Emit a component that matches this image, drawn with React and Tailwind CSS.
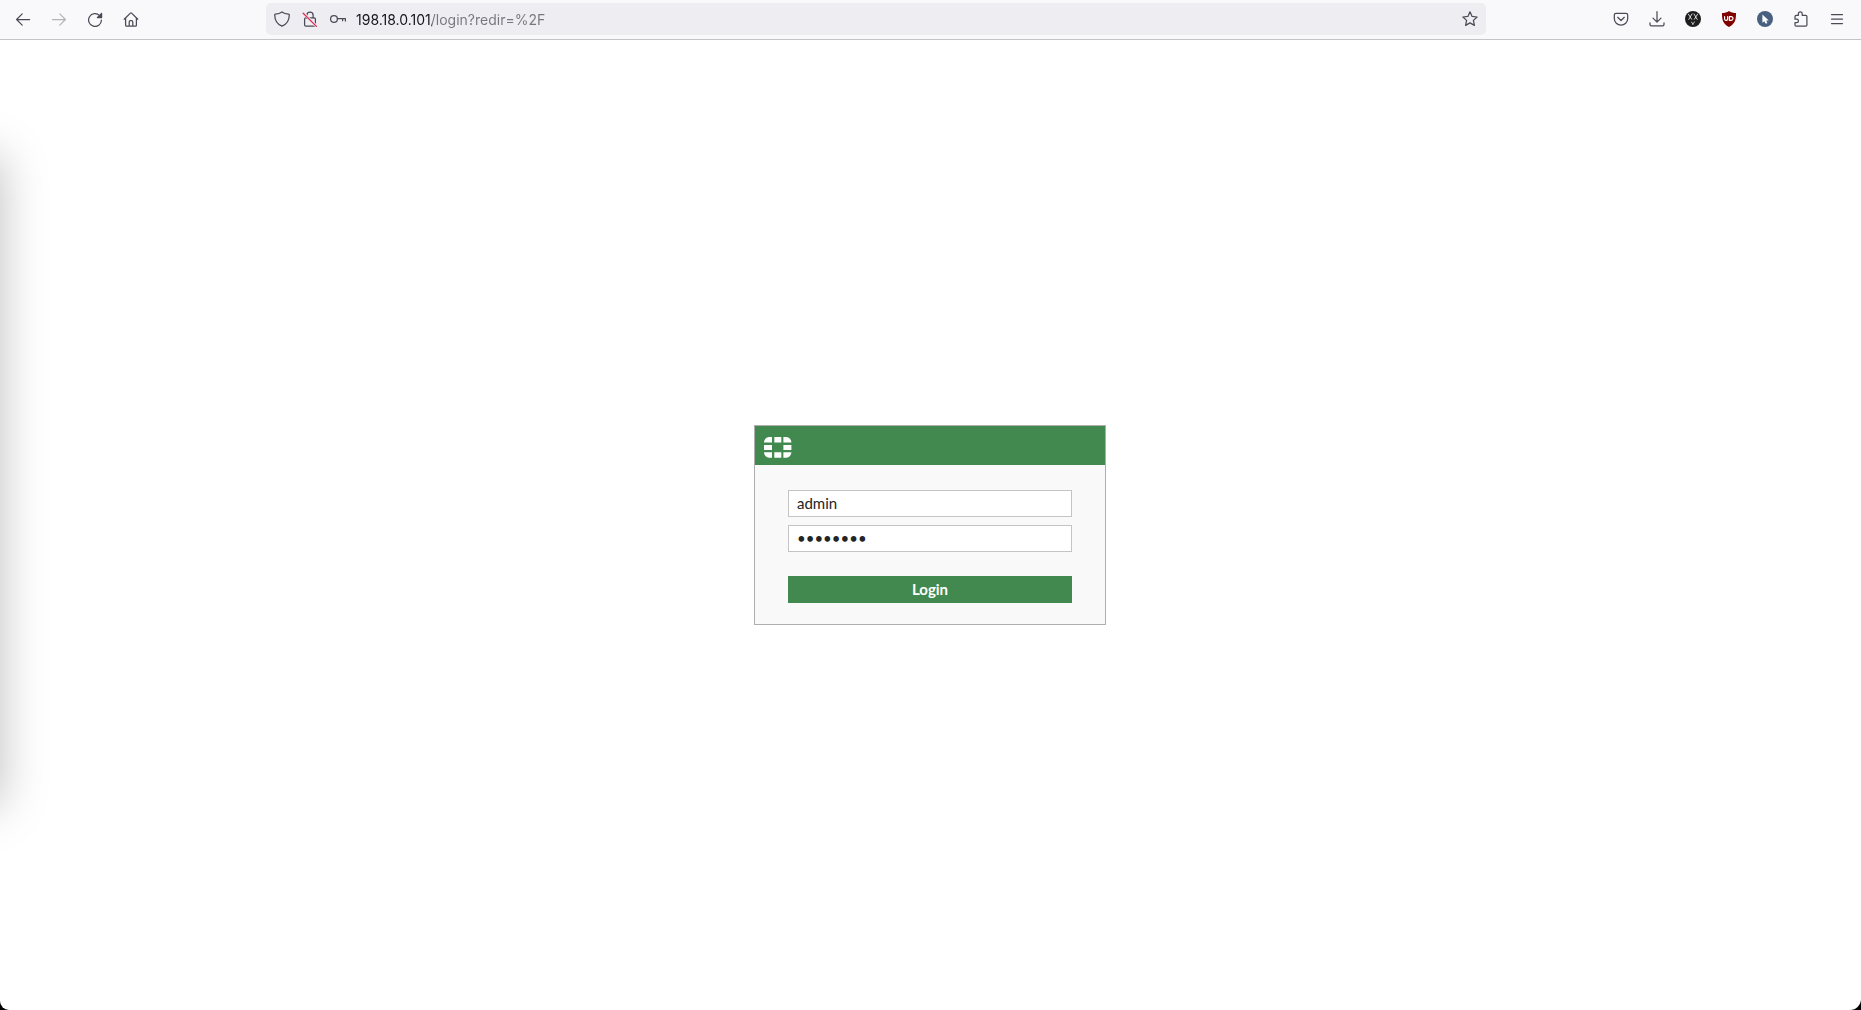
import { useState } from 'react'

function Icon({ children, className = '' }) {
  return (
    <svg
      viewBox="0 0 16 16"
      className={`w-4 h-4 shrink-0 ${className}`}
      fill="none"
      stroke="currentColor"
      strokeWidth="1.25"
      strokeLinecap="round"
      strokeLinejoin="round"
      aria-hidden="true"
    >
      {children}
    </svg>
  )
}

function ToolbarButton({ label, children, disabled }) {
  return (
    <button
      type="button"
      aria-label={label}
      disabled={disabled}
      className="flex w-9 h-8 shrink-0 items-center justify-center rounded text-[#4b4b57] hover:bg-black/5 disabled:text-[#b4b4ba]"
    >
      {children}
    </button>
  )
}

function UrlButton({ label, children }) {
  return (
    <button
      type="button"
      aria-label={label}
      className="flex w-7 h-7 shrink-0 items-center justify-center rounded text-[#4b4b57] hover:bg-black/5"
    >
      {children}
    </button>
  )
}

function UrlBar() {
  const [url, setUrl] = useState('198.18.0.101/login?redir=%2F')

  return (
    <div className="flex flex-1 min-w-0 h-8 items-center rounded-[5px] bg-[#eeedf2] px-0.5">
      <UrlButton label="Tracking protection">
        <Icon>
          <path d="M8 .9 C6.3 2.2 3.9 2.9 1.4 3.1 C.8 3.2.7 3.6.7 4 C.8 9.3 3 13.1 8 15.2 C13 13.1 15.2 9.3 15.3 4 C15.3 3.6 15.2 3.2 14.6 3.1 C12.1 2.9 9.7 2.2 8 .9Z" />
        </Icon>
      </UrlButton>
      <UrlButton label="Connection not secure">
        <Icon>
          <path d="M4.9 6.8V4.2a3.1 3.1 0 0 1 6.2 0v2.6" />
          <rect x="2.6" y="6.8" width="10.8" height="8.4" rx="1.2" />
          <path d="M1.4 2.2 14.2 15" stroke="#eeedf2" strokeWidth="2.6" />
          <path d="M1.2 2.2 14.4 15.4" stroke="#e22850" strokeWidth="1.3" />
        </Icon>
      </UrlButton>
      <UrlButton label="Saved logins">
        <Icon>
          <circle cx="4" cy="8" r="3.4" />
          <path d="M7.4 7.7h8v2.4M12.6 7.8v1.9" />
        </Icon>
      </UrlButton>
      {/* The host is dark, the path after it grey */}
      <input
        type="text"
        aria-label="Address"
        value={url}
        onChange={(e) => setUrl(e.target.value)}
        className="flex-1 min-w-0 h-8 ml-1 bg-[linear-gradient(90deg,#15141a_76px,#77767c_76px)] bg-clip-text text-transparent caret-black font-['Inter',sans-serif] text-[14px] outline-none"
      />
      <UrlButton label="Bookmark this page">
        <Icon>
          <path d="m8 .8 2.1 4.6 5 .6-3.7 3.4 1 5L8 11.9l-4.4 2.5 1-5L.9 6l5-.6Z" />
        </Icon>
      </UrlButton>
    </div>
  )
}

function Toolbar() {
  return (
    <header className="flex h-10 items-start border-b border-[#c4c4c8] bg-[#f9f9fb] pt-[3px] pl-[5px] pr-1.5">
      <ToolbarButton label="Back">
        <Icon>
          <path d="M14.6 8.5H1.6M7.2 2.9 1.6 8.5l5.6 5.6" />
        </Icon>
      </ToolbarButton>
      <ToolbarButton label="Forward" disabled>
        <Icon>
          <path d="M1.4 8.5h13M8.8 2.9l5.6 5.6-5.6 5.6" />
        </Icon>
      </ToolbarButton>
      <ToolbarButton label="Reload">
        <Icon>
          <path d="M12.6 4.6A6.4 6.4 0 1 0 14.4 9.2" />
          <path d="M14.6 2.4v4.2h-4.3Z" fill="currentColor" />
        </Icon>
      </ToolbarButton>
      <ToolbarButton label="Home">
        <Icon>
          <path d="M1.2 8.2 7.4 2.1a.9.9 0 0 1 1.2 0l6.2 6.1M2.6 7v7.2c0 .6.4 1 1 1h8.8c.6 0 1-.4 1-1V7M6.2 15V11c0-.8.5-1.3 1.3-1.3h1c.8 0 1.3.5 1.3 1.3v4" />
        </Icon>
      </ToolbarButton>
      <div className="flex flex-1 min-w-0 px-[117px]">
        <UrlBar />
      </div>
      <ToolbarButton label="Save to Pocket">
        <Icon>
          <path d="M3 2.3h10c1 0 1.7.6 1.7 1.6v3.6a6.7 6.7 0 0 1-13.4 0V3.9c0-1 .7-1.6 1.7-1.6Z" />
          <path d="M4.7 6.3 8 9.5l3.3-3.2" />
        </Icon>
      </ToolbarButton>
      <ToolbarButton label="Downloads">
        <Icon>
          <path d="M8 .7v10.2M4 7.1l4 4 4-4M1 11.8v1.6c0 .8.6 1.4 1.4 1.4h11.2c.8 0 1.4-.6 1.4-1.4v-1.6" />
        </Icon>
      </ToolbarButton>
      <ToolbarButton label="Dark theme extension">
        <Icon>
          <circle cx="8" cy="8" r="8" fill="#1d1d1d" stroke="none" />
          <path d="m3.4 3.2 3.2 5M7 3 3.8 8.4M9 3l3.2 5.4M12.6 3.2 9.4 8.2" stroke="#e4e4e4" strokeWidth=".9" />
          <path d="m6.4 11.2 1.5 1.4 1.7-1.6M7.9 12.4v1.2" stroke="#e4e4e4" strokeWidth=".9" />
        </Icon>
      </ToolbarButton>
      <ToolbarButton label="Content blocker">
        <Icon>
          <path d="M8 0c2 1.4 4.5 2 7 2 0 6.5-.6 10.6-7 14C1.6 12.6 1 8.500 1 2c2.500 0 5-.6 7-2Z" fill="#800000" stroke="none" />
          <path d="M3.6 5.7v2.2a1.5 1.5 0 0 0 3 0V5.7M8.4 5.6v3.8h1.7a1.9 1.9 0 0 0 0-3.8Z" stroke="#fff" strokeWidth="1.2" />
        </Icon>
      </ToolbarButton>
      <ToolbarButton label="Cursor extension">
        <Icon>
          <circle cx="8" cy="8" r="8" fill="#48607f" stroke="none" />
          <path d="M5.4 3.4v8.4l2-1.6 1.3 2.6 1.7-.8-1.2-2.5h2.6Z" fill="#fff" stroke="none" />
        </Icon>
      </ToolbarButton>
      <ToolbarButton label="Extensions">
        <Icon>
          <path d="M5.4 4.3V2.7a1.9 1.9 0 0 1 3.8 0v1.6h3.5c.7 0 1.2.5 1.2 1.2v8.5c0 .7-.5 1.2-1.2 1.2H3.2c-.7 0-1.2-.5-1.2-1.2v-2.4h1.7a1.7 1.7 0 0 0 0-3.4H2V5.5c0-.7.5-1.2 1.2-1.2Z" />
        </Icon>
      </ToolbarButton>
      <ToolbarButton label="Open menu">
        <Icon>
          <path d="M2.5 3.5h11M2.5 8h11M2.5 12.5h11" />
        </Icon>
      </ToolbarButton>
    </header>
  )
}

function Logo() {
  return (
    <svg viewBox="0 0 28 21" className="w-7 h-[21px]" fill="#fff" aria-hidden="true">
      <path d="M5 0h3v5.500H0A5.500 5.500 0 0 1 5 0Z" />
      <path d="M10.3 0h7v5.500h-7Z" />
      <path d="M19.400 0h3a5.500 5.500 0 0 1 5 5.500h-8Z" />
      <path d="M0 8h8v5H0Z" />
      <path d="M19.400 8h8v5h-8Z" />
      <path d="M0 15.300h8v5.500H5a5.500 5.500 0 0 1-5-5.500Z" />
      <path d="M10.3 15.300h7v5.500h-7Z" />
      <path d="M19.400 15.300h8a5.500 5.500 0 0 1-5 5.500h-3Z" />
    </svg>
  )
}

function LoginForm() {
  const [username, setUsername] = useState('admin')
  const [password, setPassword] = useState('password')
  const field =
    'block w-full h-[27px] border border-[#c4c4c6] bg-white px-2 pb-0.5 text-[15px] text-[#222426] outline-none focus:border-[#41894e]'

  return (
    <form
      onSubmit={(e) => e.preventDefault()}
      className="w-[352px] border border-[#afafb1] bg-[#f9f9f9] font-['Lato',sans-serif]"
    >
      <div className="h-[39px] bg-[#41894e] pt-[11px] pl-[9px]">
        <Logo />
      </div>
      <div className="px-[33px] pt-[25px] pb-[21px]">
        <input
          type="text"
          aria-label="Username"
          value={username}
          onChange={(e) => setUsername(e.target.value)}
          className={field}
        />
        <input
          type="password"
          aria-label="Password"
          value={password}
          onChange={(e) => setPassword(e.target.value)}
          className={`${field} mt-2`}
        />
        <button
          type="submit"
          className="block w-full h-[27px] mt-6 bg-[#41894e] text-[15px] font-bold text-white hover:bg-[#387643]"
        >
          Login
        </button>
      </div>
    </form>
  )
}

export default function App() {
  return (
    <div className="min-h-screen flex bg-black">
      <div className="relative flex flex-1 flex-col overflow-hidden rounded-bl-[9px] rounded-br-[11px] bg-white">
        <Toolbar />
        <main className="flex flex-1 items-center justify-center pr-px">
          <LoginForm />
        </main>
        {/* Shadow cast by the window next to this one */}
        <div className="absolute top-[156px] bottom-[204px] right-full w-20 shadow-[0_0_48px_0_rgba(0,0,0,0.26)] pointer-events-none" />
      </div>
    </div>
  )
}
